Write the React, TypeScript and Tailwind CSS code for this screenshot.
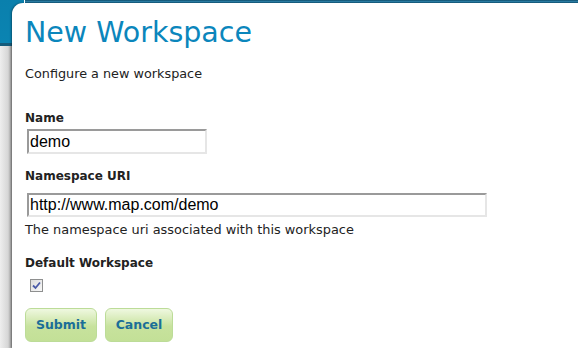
export default function App() {
  return (
    <div className="h-[348px] w-full overflow-hidden font-['DejaVu_Sans',sans-serif] text-[#222] bg-[linear-gradient(to_bottom,#0a80ad_0,#0a84b2_43px,#145b7b_43px,#145b7b_46px,transparent_46px),linear-gradient(to_right,#eeeeee,#d6d6d6_8px,#a8a8a8_11px)]">
      <div className="flex h-[3px]">
        <div className="w-[24px]" />
        <div className="w-px bg-white" />
        <div className="flex-1 bg-[linear-gradient(to_bottom,#0c4d6c,#2b7ba1,#0c4d6c)]" />
      </div>
      <div className="ml-[12px] h-[345px] rounded-tl-[11px] bg-white pl-[13px] pt-[14px] shadow-[-1px_0_2px_rgba(0,0,0,0.35)]">
        <h1 className="text-[28.5px] leading-[32px] text-[#0b86bc]">New Workspace</h1>
        <p className="mt-[17px] text-[12.8px] leading-[16px]">Configure a new workspace</p>

        <label className="mt-[28px] block text-[12px] font-bold leading-[16px]">Name</label>
        <input
          readOnly
          value="demo"
          className="ml-[2px] mt-[3px] block h-[25px] w-[180px] border-2 border-t-[#9a9a9a] border-l-[#9a9a9a] border-b-[#e6e6e6] border-r-[#e6e6e6] px-[1px] font-['Liberation_Sans',Arial,sans-serif] text-[16px] text-black outline-none"
        />

        <label className="mt-[14px] block text-[12px] font-bold leading-[16px]">Namespace URI</label>
        <input
          readOnly
          value="http://www.map.com/demo"
          className="ml-[2px] mt-[9px] block h-[24px] w-[460px] border-2 border-t-[#9a9a9a] border-l-[#9a9a9a] border-b-[#e6e6e6] border-r-[#e6e6e6] px-[1px] font-['Liberation_Sans',Arial,sans-serif] text-[16px] text-black outline-none"
        />
        <p className="mt-[5px] text-[12.9px] leading-[16px]">The namespace uri associated with this workspace</p>

        <label className="mt-[17px] block text-[12px] font-bold leading-[16px]">Default Workspace</label>
        <div className="ml-[5px] mt-[8px] flex h-[13px] w-[13px] items-center justify-center border border-[#8e8f8f] bg-[linear-gradient(135deg,#dcdcdc,#f8f8f8)]">
          <svg width="9" height="9" viewBox="0 0 9 9">
            <path d="M1 4.5 L3.5 7 L8 1.5" fill="none" stroke="#4a5aa8" strokeWidth="1.8" />
          </svg>
        </div>

        <div className="mt-[16px] flex gap-[8px]">
          <button className="h-[34px] w-[72px] rounded-[6px] border border-[#bcdc98] bg-[linear-gradient(to_bottom,#eff8e0,#c7e29d_55%,#c3e097)] text-[12.5px] font-bold text-[#1b6e98]">
            Submit
          </button>
          <button className="h-[34px] w-[68px] rounded-[6px] border border-[#bcdc98] bg-[linear-gradient(to_bottom,#eff8e0,#c7e29d_55%,#c3e097)] text-[12.5px] font-bold text-[#1b6e98]">
            Cancel
          </button>
        </div>
      </div>
    </div>
  );
}
